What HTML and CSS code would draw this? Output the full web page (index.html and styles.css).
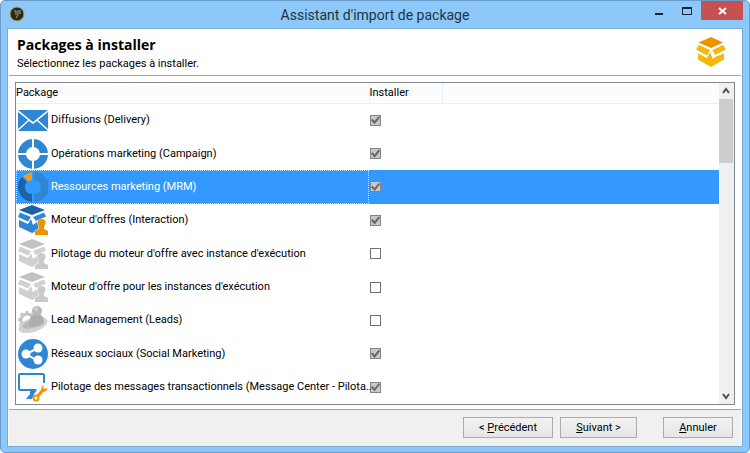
FILE: index.html
```html
<!DOCTYPE html>
<html lang="fr">
<head>
<meta charset="utf-8">
<title>Assistant d'import de package</title>
<link rel="stylesheet" href="styles.css">
</head>
<body>
<svg class="defs" aria-hidden="true">
  <symbol id="offer" viewBox="0 0 30 30">
    <path class="top" d="M14 0 27 5 14 10 1 5z"/>
    <path class="side" d="M2 7.500 13 12 10 16.500 0 12zM26 7.500 28 11.500 18 16 15 12zM1 15 10 19 13 14 15 20 19 17 22 16V22L19 26 14 28 1 22z"/>
    <path class="edge" d="M23.500 14a4 4 0 0 1 4 4c0 2-1.500 2-1.500 4v2l4 2v4H17v-4l4-2v-2c0-2-1.500-2-1.500-4a4 4 0 0 1 4-4z"/>
  </symbol>
</svg>
<div class="window">
  <header class="titlebar">
    <svg class="app-icon" viewBox="0 0 16 16" aria-hidden="true">
      <circle cx="8" cy="8" r="7" fill="#29271f" stroke="#b3ad3c"/>
      <path d="M5 5h2v4M9 4v5M9 9l-2 3M11 4v4" fill="none" stroke="#aaa891"/>
    </svg>
    <h1 class="caption">Assistant d'import de package</h1>
    <div class="controls">
      <button class="control" aria-label="Réduire"><svg viewBox="0 0 28 20"><path d="M10 12h8v2h-8z" fill="#1c242c"/></svg></button>
      <button class="control" aria-label="Agrandir"><svg viewBox="0 0 28 20"><path d="M9 6h10v8H9zM10 8v5h8V8z" fill="#1c242c" fill-rule="evenodd"/></svg></button>
      <button class="control close" aria-label="Fermer"><svg viewBox="0 0 42 20"><path d="M18 7l7 6M25 7l-7 6" stroke="#fff" stroke-width="2"/></svg></button>
    </div>
  </header>
  <div class="dialog">
    <div class="intro">
      <div>
        <h2 class="heading">Packages à installer</h2>
        <p class="hint">Sélectionnez les packages à installer.</p>
      </div>
      <svg class="brand" viewBox="0 0 30 30" aria-hidden="true">
        <path d="M15 0 27 5.500 15 11 2.500 5.500z" fill="#ee9200"/>
        <path d="M3 8 14 13 11 18.500 0 12.500zM27 8 30 12.500 19 18 16.500 13zM2 16.500 11 21 14 15 17 22 19 20 28 16.500V22.500L15 30 2 22.500z" fill="#f2b90d"/>
      </svg>
    </div>
    <main class="content">
      <div class="list">
        <table class="packages">
          <thead>
            <tr><th class="name-col">Package</th><th class="install-col">Installer</th><th></th></tr>
          </thead>
          <tbody>
            <tr>
              <td><label class="package" for="p1"><svg class="icon" viewBox="0 0 30 30"><path d="M0 5h30L15 17zM0 7l10 8L0 24zM30 7v17l-10-9zM0 26l11-10 4 3 4-3 11 10z" fill="#2f86d2"/></svg>Diffusions (Delivery)</label></td>
              <td><input class="check" type="checkbox" id="p1" checked></td><td></td>
            </tr>
            <tr>
              <td><label class="package" for="p2"><svg class="icon" viewBox="0 0 30 30"><circle cx="15" cy="15" r="11" fill="none" stroke="#2f86d2" stroke-width="8"/><path d="M15 0v30M0 15h30" stroke="#fff" stroke-width="2"/></svg>Opérations marketing (Campaign)</label></td>
              <td><input class="check" type="checkbox" id="p2" checked></td><td></td>
            </tr>
            <tr class="selected">
              <td><label class="package" for="p3"><svg class="icon" viewBox="0 0 30 30"><path d="M16 0a15 15 0 0 1 0 30v-8a7 7 0 0 0 0-14z" fill="#2f86d2"/><path d="M4 5 9 10a7 7 0 0 0 5 12v8A15 15 0 0 1 4 5z" fill="#1c62a8"/><path d="M5 4 14 0v8l-4 1z" fill="#f29b1d"/></svg>Ressources marketing (MRM)</label></td>
              <td><input class="check" type="checkbox" id="p3" checked></td><td></td>
            </tr>
            <tr>
              <td><label class="package" for="p4"><svg class="icon offer"><use href="#offer"/></svg>Moteur d'offres (Interaction)</label></td>
              <td><input class="check" type="checkbox" id="p4" checked></td><td></td>
            </tr>
            <tr>
              <td><label class="package" for="p5"><svg class="icon offer muted"><use href="#offer"/></svg>Pilotage du moteur d'offre avec instance d'exécution</label></td>
              <td><input class="check" type="checkbox" id="p5"></td><td></td>
            </tr>
            <tr>
              <td><label class="package" for="p6"><svg class="icon offer muted"><use href="#offer"/></svg>Moteur d'offre pour les instances d'exécution</label></td>
              <td><input class="check" type="checkbox" id="p6"></td><td></td>
            </tr>
            <tr>
              <td><label class="package" for="p7"><svg class="icon" viewBox="0 0 30 30"><circle cx="9" cy="15" r="6" fill="none" stroke="#c4c4c4" stroke-width="3"/><circle cx="9" cy="15" r="8" fill="none" stroke="#c4c4c4" stroke-width="2" stroke-dasharray="3 3"/><ellipse cx="15" cy="20" rx="15" ry="7" transform="rotate(-18 15 20)" fill="#d2d2d2"/><ellipse cx="14" cy="19" rx="10" ry="4" transform="rotate(-18 14 19)" fill="#b9b9b9"/><path d="M11 21c0-7 2-11 5-11h6c3 0 4 5 4 8-4 4-10 5-15 3z" fill="#adadad"/><circle cx="19" cy="6" r="5" fill="#b8b8b8"/><circle cx="18" cy="4" r="2" fill="#d2d2d2"/></svg>Lead Management (Leads)</label></td>
              <td><input class="check" type="checkbox" id="p7"></td><td></td>
            </tr>
            <tr>
              <td><label class="package" for="p8"><svg class="icon" viewBox="0 0 30 30"><circle cx="15" cy="15" r="15" fill="#2f86d2"/><path d="M20 9 8 15l12 7" fill="none" stroke="#fff" stroke-width="2"/><g fill="#fff"><circle cx="8" cy="15" r="4.500"/><circle cx="20" cy="9" r="4.500"/><circle cx="20" cy="21" r="4.500"/></g></svg>Réseaux sociaux (Social Marketing)</label></td>
              <td><input class="check" type="checkbox" id="p8" checked></td><td></td>
            </tr>
            <tr>
              <td><label class="package" for="p9"><svg class="icon" viewBox="0 0 30 30"><path d="M26 11V3q0-1-1-1H2Q1 2 1 3v14q0 1 1 1h16" fill="none" stroke="#2f86d2" stroke-width="2"/><path d="M12 18h7l-3 4-2 5H8l4-5z" fill="#2f86d2"/><path d="M18 26 25 18" stroke="#ee9200" stroke-width="3"/><circle cx="18" cy="26" r="2.500" fill="#fff" stroke="#ee9200" stroke-width="2"/><path d="M26 13q-4 2-2 6 4 2 6-3l-3 1-2-1z" fill="#ee9200"/></svg>Pilotage des messages transactionnels (Message Center - Pilota..</label></td>
              <td><input class="check" type="checkbox" id="p9" checked></td><td></td>
            </tr>
          </tbody>
        </table>
        <div class="scrollbar">
          <button class="arrow" aria-label="Défiler vers le haut"><svg viewBox="0 0 14 16"><path d="M4 10l3-4 3 4" fill="none" stroke="#505050" stroke-width="2"/></svg></button>
          <div class="thumb"></div>
          <button class="arrow" aria-label="Défiler vers le bas"><svg viewBox="0 0 14 16"><path d="M4 6l3 4 3-4" fill="none" stroke="#505050" stroke-width="2"/></svg></button>
        </div>
      </div>
    </main>
    <footer class="actions">
      <button class="button wide">&lt; <u>P</u>récédent</button>
      <button class="button medium"><u>S</u>uivant &gt;</button>
      <button class="button cancel"><u>A</u>nnuler</button>
    </footer>
  </div>
</div>
</body>
</html>
```
FILE: styles.css
```css
* { box-sizing: border-box; }

body {
  margin: 0;
  background: #fff;
  color: #000;
  font: 11px/16px Roboto, "Open Sans", sans-serif;
}

button, input { font: inherit; margin: 0; padding: 0; }
svg { display: block; }
.defs { position: absolute; width: 0; height: 0; }

.window {
  display: flex;
  flex-direction: column;
  height: 100vh;
  min-height: 420px;
  padding: 0 6px 5px;
  border: 1px solid #6a9cc9;
  border-radius: 5px;
  background: #8cc8fa;
}

.titlebar {
  display: grid;
  grid-template-columns: 1fr auto 1fr;
  height: 27px;
  flex: none;
}
.app-icon { width: 16px; height: 16px; margin: 5px 2px; }
.caption {
  margin: 0;
  color: #26323e;
  font-size: 14px;
  font-weight: 400;
  line-height: 28px;
}
.controls { display: flex; justify-content: flex-end; }
.control { width: 28px; height: 19px; border: 0; background: none; }
.control svg { width: 100%; height: 20px; }
.close { width: 42px; background: #c75050; }

.dialog {
  display: flex;
  flex: 1;
  flex-direction: column;
  min-height: 0;
  border: 1px solid #78aad6;
  background: #fff;
}
.intro {
  display: flex;
  justify-content: space-between;
  margin: 0 1px;
  padding: 7px 15px 3px 8px;
  height: 47px;
  border-bottom: 1px solid #a5a5a5;
}
.heading { margin: 0; font: 700 14px/18px "Open Sans", sans-serif; }
.hint { margin: 2px 0 0; line-height: 16px; }
.brand { width: 30px; height: 30px; margin-top: 1px; }

.content { display: flex; flex: 1; min-height: 0; padding: 6px 7px 4px; }
.list {
  display: flex;
  flex: 1;
  overflow: hidden;
  border: 1px solid #82878f;
}
.packages {
  flex: 1;
  width: 100%;
  height: 100%;
  table-layout: fixed;
  border-collapse: collapse;
}
th {
  height: 20px;
  padding: 0;
  border-right: 1px solid #e5f0fa;
  border-bottom: 1px solid #e5f0fa;
  background: #fcfcfc;
  font-weight: 400;
  text-align: left;
}
th:last-child { border-right: 0; }
.name-col { width: 353px; }
.install-col { width: 73px; }
td { padding: 0 0 0 1px; vertical-align: middle; }
.package {
  display: flex;
  align-items: center;
  gap: 3px;
  height: 31px;
  padding-left: 1px;
  white-space: nowrap;
}
.icon { flex: none; width: 30px; height: 30px; }
.offer { --top: #1c62a8; --side: #2f86d2; --edge: #ee9200; }
.offer.muted { --top: #c2c2c2; --side: #d0d0d0; --edge: #c9c9c9; }
.top { fill: var(--top); }
.side { fill: var(--side); }
.edge { fill: var(--edge); stroke: #fff; paint-order: stroke; }
.selected { background: #3399ff; color: #fff; }
.selected td:first-child { outline: 1px dotted #cce6ff; outline-offset: -1px; }

.check {
  appearance: none;
  display: grid;
  place-items: center;
  width: 11px;
  height: 11px;
  border: 1px solid #707070;
  background: #fff;
}
.check:checked { border-color: #858585; background: #c8c8c8; }
.check:checked::after {
  content: "";
  width: 9px;
  height: 9px;
  background: #666;
  clip-path: polygon(0 50%, 15% 35%, 40% 60%, 85% 5%, 100% 20%, 40% 95%);
}

.scrollbar {
  display: flex;
  flex: none;
  flex-direction: column;
  width: 15px;
  padding-right: 1px;
  background: #f0f0f0;
}
.arrow { height: 16px; border: 0; background: none; }
.arrow svg { width: 14px; height: 16px; }
.arrow:last-child { margin-top: auto; }
.thumb { height: 64px; background: #cdcdcd; }

.actions {
  display: flex;
  justify-content: flex-end;
  gap: 7px;
  margin: 0 1px;
  padding: 7px 8px 8px;
  border-top: 1px solid #a5a5a5;
  background: #f0f0f0;
}
.button {
  height: 21px;
  border: 1px solid #acacac;
  background: linear-gradient(#f1f1f1, #e6e6e6);
  color: #000;
  line-height: 18px;
}
.wide { width: 90px; }
.medium { width: 77px; }
.cancel { width: 70px; margin-left: 19px; }
```
